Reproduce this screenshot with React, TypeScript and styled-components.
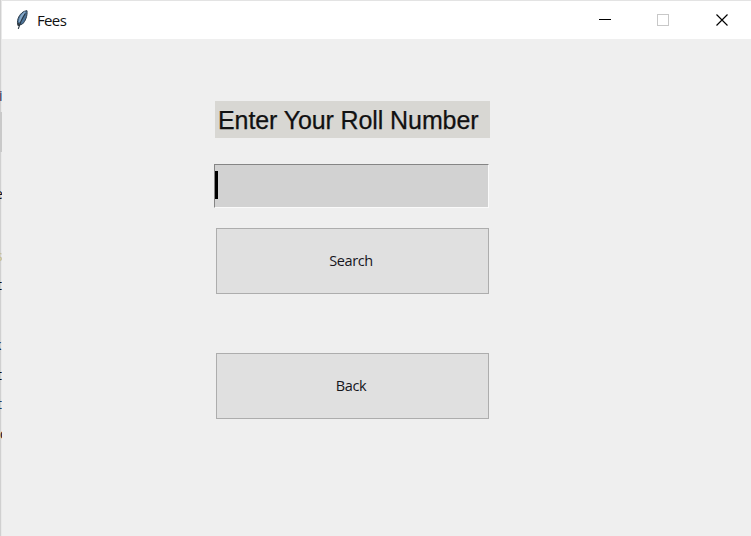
import React from "react";
import styled, { createGlobalStyle } from "styled-components";

const GlobalStyle = createGlobalStyle`
  * { box-sizing: border-box; }
  html, body { margin: 0; padding: 0; overflow: hidden; background: #efefef; }
`;

const Screen = styled.div`
  width: 751px;
  height: 536px;
  display: flex;
  overflow: hidden;
  background: #efefef;
`;

const Backdrop = styled.div`
  width: 2px;
  flex: none;
  overflow: hidden;
  background: linear-gradient(to right, #d0d0d0 1px, #e9e9e9 1px);
  padding-top: 86px;
`;

const Fragment = styled.div<{ $height: number; $color?: string; $shift?: number }>`
  height: ${(p) => p.$height}px;
  text-indent: ${(p) => p.$shift ?? 0}px;
  color: ${(p) => p.$color ?? "#111"};
  font: 14px/20px "Open Sans", sans-serif;
  white-space: nowrap;
`;

const BackdropEdge = styled.div`
  height: 40px;
  margin-bottom: 32px;
  background: #c9c9c9;
`;

const Window = styled.main`
  flex: 1;
  display: flex;
  flex-direction: column;
  border-top: 1px solid #e3e3e3;
`;

const TitleBar = styled.header`
  height: 38px;
  display: flex;
  align-items: center;
  background: #fff;
  padding-left: 13px;
`;

const Title = styled.span`
  flex: 1;
  margin-left: 8px;
  color: #111;
  font: 15px/20px "Open Sans", sans-serif;
  letter-spacing: -0.65px;
`;

const Controls = styled.div`
  display: flex;
`;

const Control = styled.button`
  width: 58.5px;
  height: 38px;
  padding: 0;
  border: 0;
  background: transparent;
  display: flex;
  align-items: center;
  justify-content: center;
`;

const Form = styled.section`
  width: 276px;
  margin: 62px 0 0 212px;
  display: flex;
  flex-direction: column;
`;

const Label = styled.label`
  width: 275px;
  height: 37px;
  margin-left: 0.5px;
  padding-left: 3.5px;
  background: #d8d7d3;
  color: #111;
  font: 25px/38px "Liberation Sans", Arial, sans-serif;
  letter-spacing: -0.1px;
  -webkit-text-stroke: 0.25px #111;
  white-space: nowrap;
`;

const Entry = styled.div`
  width: 275px;
  height: 44px;
  margin-top: 26px;
  padding-top: 6px;
  background: #d2d2d2;
  border: 1px solid;
  border-color: #858585 #fafafa #fafafa #858585;
`;

const Caret = styled.div`
  width: 3px;
  height: 28px;
  background: #000;
`;

const Button = styled.button<{ $gap: number }>`
  width: 273px;
  height: 66px;
  margin: ${(p) => p.$gap}px 0 0 2px;
  padding: 0 3px 0 0;
  border: 1px solid #adadad;
  background: #e0e0e0;
  color: #15151c;
  font: 14.5px/20px "Open Sans", sans-serif;
  letter-spacing: -0.4px;
`;

const Feather = () => (
  <svg width="14" height="20" viewBox="0 0 14 20">
    <path d="M12 0.7C8.5 0.8 4.6 4 3 8.8C2.2 11.4 2.4 13.7 3 15.6L7.4 14C10.4 11.4 12.6 5.6 12 0.7Z" fill="#4c7398" stroke="#2b3b4b" strokeWidth="1" />
    <path d="M10.2 2.3C7.2 4.3 5.2 7.8 4.7 12" fill="none" stroke="#86a9c9" strokeWidth="2" />
    <path d="M10.4 3.2C7.2 8 5 12.5 3.3 18.8" fill="none" stroke="#26333f" strokeWidth="1.1" />
    <path d="M2.6 11.8L2.8 15.8L5.5 15Z" fill="#353b40" />
  </svg>
);

export default function App() {
  return (
    <>
      <GlobalStyle />
      <Screen>
        <Backdrop aria-hidden="true">
          <Fragment $height={26} $color="#292950" $shift={-1}>i</Fragment>
          <BackdropEdge />
          <Fragment $height={62} $shift={-5}>e</Fragment>
          <Fragment $height={29} $color="#c9bf8c" $shift={-4}>s</Fragment>
          <Fragment $height={60} $shift={-3}>t</Fragment>
          <Fragment $height={30} $shift={-6}>k</Fragment>
          <Fragment $height={29} $shift={-3}>t</Fragment>
          <Fragment $height={30} $color="#204060" $shift={-3}>t</Fragment>
          <Fragment $height={30}>d</Fragment>
        </Backdrop>
        <Window>
          <TitleBar>
            <Feather />
            <Title>Fees</Title>
            <Controls>
              <Control aria-label="Minimize">
                <svg width="12" height="12" shapeRendering="crispEdges"><path d="M0 5.5H12" stroke="#000" /></svg>
              </Control>
              <Control aria-label="Maximize" disabled>
                <svg width="12" height="12" shapeRendering="crispEdges"><path d="M0.5 0.5H11.5V11.5H0.5Z" fill="none" stroke="#c8c8c8" /></svg>
              </Control>
              <Control aria-label="Close">
                <svg width="12" height="12"><path d="M0.5 0.5L11.5 11.5M11.5 0.5L0.5 11.5" stroke="#000" strokeWidth="1.15" /></svg>
              </Control>
            </Controls>
          </TitleBar>
          <Form>
            <Label>Enter Your Roll Number</Label>
            <Entry role="textbox" aria-label="Roll number"><Caret /></Entry>
            <Button $gap={20}>Search</Button>
            <Button $gap={59}>Back</Button>
          </Form>
        </Window>
      </Screen>
    </>
  );
}
